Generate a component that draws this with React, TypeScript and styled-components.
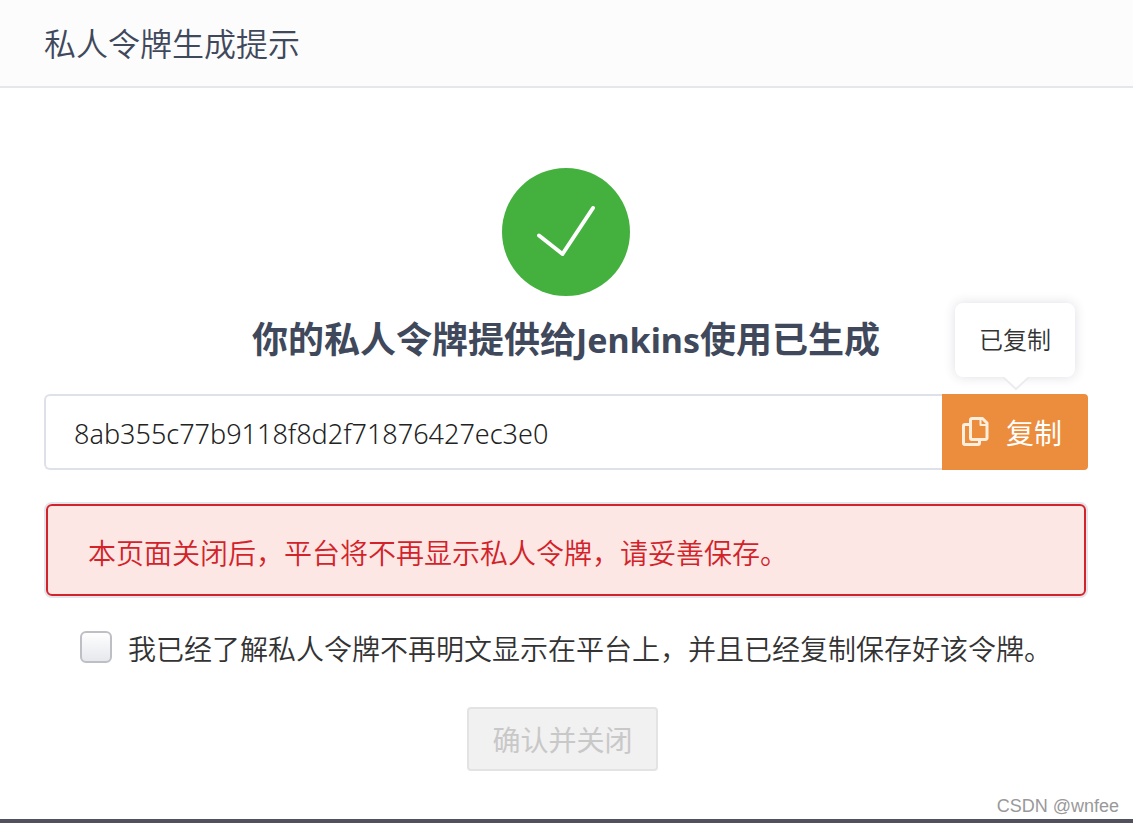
import React, { useState } from "react";
import styled, { createGlobalStyle } from "styled-components";

const GlobalStyle = createGlobalStyle`
  * { box-sizing: border-box; }
  body {
    margin: 0;
    background: #fff;
    color: #333;
    font-family: "Noto Sans", "Noto Sans CJK SC", sans-serif;
    font-size: 28px;
    line-height: 40px;
  }
  button, input { font: inherit; }
`;

const Dialog = styled.div`
  position: relative;
  display: flex;
  flex-direction: column;
  min-height: 100vh;
  border-bottom: 4px solid #50515c;
`;

const Header = styled.header`
  padding: 20px 44px 18px;
  background: #fcfcfc;
  border-bottom: 2px solid #e4e7eb;
`;

const Title = styled.h1`
  margin: 0;
  font-size: 32px;
  line-height: 48px;
  font-weight: 350;
  color: #40485b;
`;

const Content = styled.main`
  flex: 1;
  display: flex;
  flex-direction: column;
  padding: 80px 45px 48px 44px;
`;

const SuccessMark = styled.svg`
  align-self: center;
  width: 128px;
  height: 128px;
`;

const Heading = styled.h2`
  margin: 18px 0 28px;
  font-size: 36px;
  line-height: 52px;
  font-weight: 700;
  text-align: center;
  color: #40485b;
`;

const Latin = styled.span`
  font-size: 34px;
`;

const TokenRow = styled.div`
  display: flex;
  height: 76px;
`;

const TokenInput = styled.input`
  flex: 1;
  min-width: 0;
  padding: 4px 28px 0;
  border: 2px solid #dee1e7;
  border-right: 0;
  border-radius: 6px 0 0 6px;
  outline: 0;
  background: #fff;
  color: #222;
  font-size: 27px;
  font-weight: 300;
`;

const CopyGroup = styled.div`
  position: relative;
  display: flex;
`;

const CopyButton = styled.button`
  display: flex;
  align-items: center;
  gap: 16px;
  width: 146px;
  padding: 2px 0 0 20px;
  border: 0;
  border-radius: 0 4px 4px 0;
  background: #eb8d3c;
  color: #fff;
  cursor: pointer;
`;

const CopyIcon = styled.svg`
  width: 28px;
  height: 30px;
  margin-bottom: 4px;
`;

const Tooltip = styled.div`
  position: absolute;
  right: 13px;
  bottom: 93px;
  width: 120px;
  padding: 17px 0;
  border-radius: 8px;
  background: #fff;
  box-shadow: 0 0 12px rgba(50, 50, 90, 0.16);
  font-size: 24px;
  font-weight: 350;
  text-align: center;
`;

const TooltipArrow = styled.svg`
  position: absolute;
  top: 100%;
  left: 48px;
  width: 26px;
  height: 13px;
`;

const Alert = styled.p`
  margin: 0;
  padding: 27px 40px 21px;
  border: 2px solid #d2232a;
  border-radius: 6px;
  background: #fde7e5;
  color: #d2232a;
  font-weight: 350;
`;

const AlertFrame = styled.div`
  margin-top: 32px;
  border: 2px solid #e1e4ea;
  border-radius: 8px;
`;

const Agreement = styled.label`
  display: flex;
  align-items: center;
  gap: 16px;
  margin: 29px 0 0 36px;
  font-weight: 350;
  cursor: pointer;
`;

const AgreementText = styled.span`
  padding-top: 2px;
  margin-bottom: -2px;
`;

const Checkbox = styled.input`
  appearance: none;
  flex: none;
  width: 32px;
  height: 32px;
  margin: 0;
  border: 2px solid #bdbfc5;
  border-radius: 6px;
  background: linear-gradient(#fefefe, #e6e8ed);

  &:checked { background: #eb8d3c; }
`;

const ConfirmButton = styled.button`
  align-self: center;
  height: 64px;
  margin: 40px 7px 0 0;
  padding: 2px 23px 0;
  border: 2px solid #e3e3e3;
  border-radius: 4px;
  background: #eb8d3c;
  color: #fff;

  &:disabled {
    background: #f1f1f1;
    color: #c8c8c8;
  }
`;

const Watermark = styled.small`
  position: absolute;
  right: 14px;
  bottom: 1px;
  font-family: "Liberation Sans", Arial, sans-serif;
  font-size: 18px;
  line-height: 24px;
  color: #999;
`;

export default function App() {
  const [agreed, setAgreed] = useState(false);

  return (
    <>
      <GlobalStyle />
      <Dialog>
        <Header>
          <Title>私人令牌生成提示</Title>
        </Header>
        <Content>
          <SuccessMark viewBox="0 0 128 128" aria-hidden="true">
            <circle cx="64" cy="64" r="64" fill="#44b13f" />
            <path
              d="M37 67.500 60.500 86 91 40"
              fill="none"
              stroke="#fff"
              strokeWidth="4"
              strokeLinecap="round"
              strokeLinejoin="round"
            />
          </SuccessMark>
          <Heading>
            你的私人令牌提供给<Latin>Jenkins</Latin>使用已生成
          </Heading>
          <TokenRow>
            <TokenInput aria-label="私人令牌" readOnly value="8ab355c77b9118f8d2f71876427ec3e0" />
            <CopyGroup>
              <CopyButton type="button">
                <CopyIcon viewBox="0 0 28 30" fill="none" stroke="#fdeedd" strokeWidth="3" strokeLinejoin="round" aria-hidden="true">
                  <path d="M10 2.500h10.500l4.500 4.500V22a1.500 1.500 0 0 1-1.500 1.500H10A1.500 1.500 0 0 1 8.500 22V4A1.500 1.500 0 0 1 10 2.500Z" />
                  <path d="M18.500 3v6h6" strokeWidth="2" />
                  <path d="M8.500 8.500H3A1.500 1.500 0 0 0 1.500 10v17A1.500 1.500 0 0 0 3 28.500h13A1.500 1.500 0 0 0 17.500 27v-3.500" />
                </CopyIcon>
                复制
              </CopyButton>
              <Tooltip role="tooltip">
                已复制
                <TooltipArrow viewBox="0 0 26 13" aria-hidden="true">
                  <path d="M0 0 13 12 26 0" fill="#fff" stroke="#ececef" strokeWidth="2" />
                </TooltipArrow>
              </Tooltip>
            </CopyGroup>
          </TokenRow>
          <AlertFrame>
            <Alert role="alert">本页面关闭后，平台将不再显示私人令牌，请妥善保存。</Alert>
          </AlertFrame>
          <Agreement>
            <Checkbox type="checkbox" checked={agreed} onChange={(e) => setAgreed(e.target.checked)} />
            <AgreementText>我已经了解私人令牌不再明文显示在平台上，并且已经复制保存好该令牌。</AgreementText>
          </Agreement>
          <ConfirmButton type="button" disabled={!agreed}>
            确认并关闭
          </ConfirmButton>
        </Content>
        <Watermark>CSDN @wnfee</Watermark>
      </Dialog>
    </>
  );
}
